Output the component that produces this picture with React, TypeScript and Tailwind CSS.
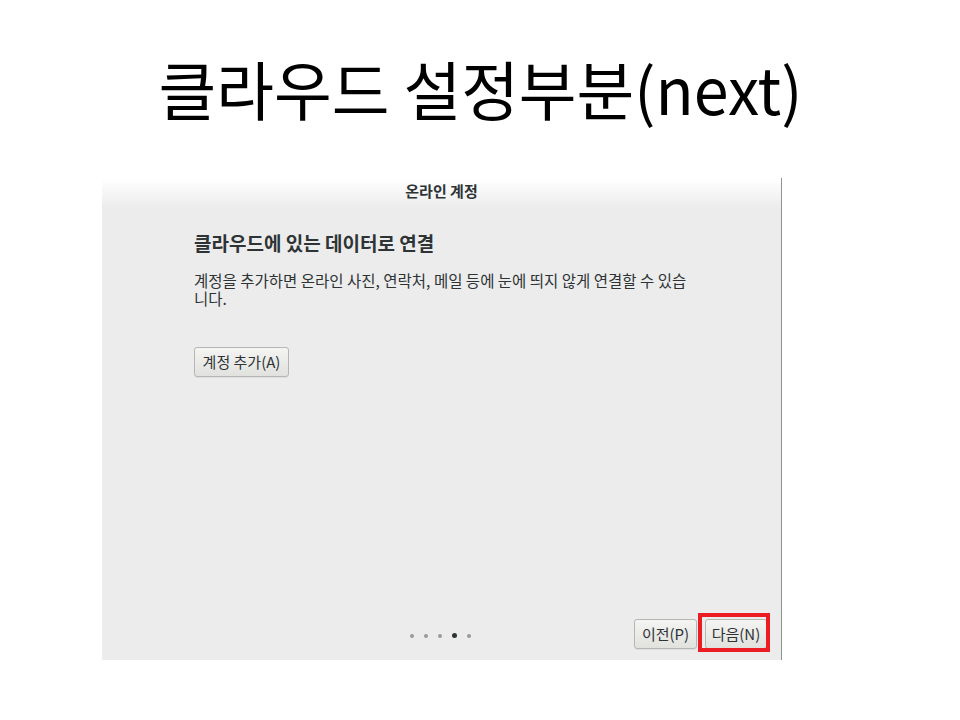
import React from 'react';

const ui = { fontFamily: '"Noto Sans CJK KR", "Noto Sans", sans-serif' };

const Dot = ({ active }: { active?: boolean }) => (
    <span className={active ? 'w-[5px] h-[5px] rounded-full bg-[#2e3436]' : 'w-[4px] h-[4px] rounded-full bg-[#9a9a9a]'} />
);

const GtkButton = ({ children, className = '' }: { children: React.ReactNode; className?: string }) => (
    <button
        className={`h-[30px] rounded-[3px] border border-[#b6b6b3] bg-gradient-to-b from-[#f4f4f2] to-[#e1e1de] text-[15px] text-[#2e3436] shadow-[0_1px_0_rgba(0,0,0,0.06)] ${className}`}
        style={ui}
    >
        {children}
    </button>
);

const App: React.FC = () => {
    return (
        <div className="w-[960px] h-[720px] bg-white flex flex-col">
            <h1
                className="mt-[46px] h-[82px] self-center text-[64px] leading-[82px] text-black scale-x-[0.98] whitespace-nowrap"
                style={{ fontFamily: '"Noto Sans CJK KR", "Liberation Sans", sans-serif' }}
            >
                클라우드 설정부분(next)
            </h1>

            <div className="mt-[50px] ml-[102px] w-[680px] h-[482px] flex flex-col bg-[#ececec] border-r border-[#8e9491]" style={ui}>
                <div className="h-[30px] shrink-0 bg-gradient-to-b from-white to-[#ececec] flex items-center justify-center">
                    <span className="text-[15px] font-bold text-[#2e3436] mt-[-4px]">온라인 계정</span>
                </div>

                <div className="flex-1 pl-[92px] pt-[23px]">
                    <h2 className="text-[19px] font-bold text-[#2e3436] leading-[24px]">클라우드에 있는 데이터로 연결</h2>
                    <p className="mt-[16px] text-[15.5px] leading-[18px] text-[#2e3436]">
                        계정을 추가하면 온라인 사진, 연락처, 메일 등에 눈에 띄지 않게 연결할 수 있습
                        <br />
                        니다.
                    </p>
                    <GtkButton className="mt-[40px] w-[95px]">계정 추가(A)</GtkButton>
                </div>

                <div className="h-[41px] shrink-0 relative flex items-start pr-[14px]">
                    <div className="absolute left-0 right-0 top-[14px] flex justify-center items-center gap-[10px] pr-[2px]">
                        <Dot />
                        <Dot />
                        <Dot />
                        <Dot active />
                        <Dot />
                    </div>
                    <div className="ml-auto flex gap-[8px]">
                        <GtkButton className="w-[63px]">이전(P)</GtkButton>
                        <div className="relative">
                            <GtkButton className="w-[62px]">다음(N)</GtkButton>
                            <div className="absolute left-[-7px] top-[-6px] w-[72px] h-[39px] border-4 border-[#ec1c24]" />
                        </div>
                    </div>
                </div>
            </div>
        </div>
    );
};

export default App;
